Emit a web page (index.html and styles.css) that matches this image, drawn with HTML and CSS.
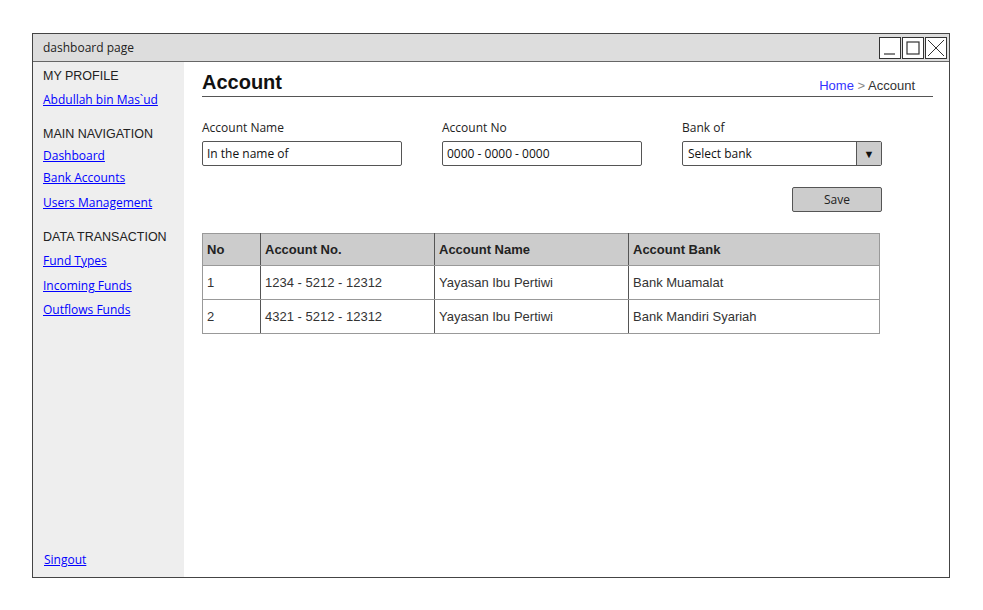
FILE: index.html
```html
<!DOCTYPE html>
<html>
<head>
    <title>dashboard page</title>
    <link rel="stylesheet" href="styles.css">
</head>
<body>
    <div class="window">
        <div class="titlebar">
            <span class="title">dashboard page</span>
            <div class="controls">
                <span class="ctrl"><svg width="20" height="20" viewBox="0 0 20 20"><line x1="4" y1="16" x2="15" y2="16" stroke="#333" stroke-width="1.2"/></svg></span>
                <span class="ctrl"><svg width="20" height="20" viewBox="0 0 20 20"><rect x="4" y="4" width="12" height="12" fill="none" stroke="#333" stroke-width="1.2"/></svg></span>
                <span class="ctrl"><svg width="20" height="20" viewBox="0 0 20 20"><path d="M2 2 L18 18 M18 2 L2 18" stroke="#333" stroke-width="1"/></svg></span>
            </div>
        </div>
        <div class="main">
            <div class="sidebar">
                <div class="nav-head first">MY PROFILE</div>
                <a href="#" class="link gap8">Abdullah bin Mas`ud</a>

                <div class="nav-head">MAIN NAVIGATION</div>
                <a href="#" class="link gap6">Dashboard</a>
                <a href="#" class="link gap6">Bank Accounts</a>
                <a href="#" class="link gap9">Users Management</a>

                <div class="nav-head">DATA TRANSACTION</div>
                <a href="#" class="link gap8">Fund Types</a>
                <a href="#" class="link gap9">Incoming Funds</a>
                <a href="#" class="link gap8">Outflows Funds</a>

                <a href="#" class="link signout">Singout</a>
            </div>
            <div class="content">
                <div class="page-head">
                    <h1>Account</h1>
                    <div class="breadcrumb"><a href="#">Home</a> <span class="sep">&gt;</span> Account</div>
                </div>

                <div class="form">
                    <div class="fields">
                        <div class="field">
                            <label>Account Name</label>
                            <div class="input">In the name of</div>
                        </div>
                        <div class="field">
                            <label>Account No</label>
                            <div class="input">0000 - 0000 - 0000</div>
                        </div>
                        <div class="field">
                            <label>Bank of</label>
                            <div class="input select">
                                <span class="select-text">Select bank</span>
                                <span class="select-arrow">&#9660;</span>
                            </div>
                        </div>
                    </div>
                    <div class="actions">
                        <button class="save">Save</button>
                    </div>
                </div>

                <table class="accounts">
                    <thead>
                        <tr>
                            <th class="c-no">No</th>
                            <th class="c-acc">Account No.</th>
                            <th class="c-name">Account Name</th>
                            <th class="c-bank">Account Bank</th>
                        </tr>
                    </thead>
                    <tbody>
                        <tr>
                            <td>1</td>
                            <td>1234 - 5212 - 12312</td>
                            <td>Yayasan Ibu Pertiwi</td>
                            <td>Bank Muamalat</td>
                        </tr>
                        <tr>
                            <td>2</td>
                            <td>4321 - 5212 - 12312</td>
                            <td>Yayasan Ibu Pertiwi</td>
                            <td>Bank Mandiri Syariah</td>
                        </tr>
                    </tbody>
                </table>
            </div>
        </div>
    </div>
</body>
</html>
```

FILE: styles.css
```css
body {
    margin: 0;
    background: white;
    font-family: "Comic Sans MS", "Open Sans", sans-serif;
    font-size: 12px;
    color: #222;
}
.window {
    margin: 33px 0 0 32px;
    width: 918px;
    height: 545px;
    box-sizing: border-box;
    border: 1px solid #444;
    display: flex;
    flex-direction: column;
}
.titlebar {
    height: 28px;
    box-sizing: border-box;
    background: #dddddd;
    border-bottom: 1px solid #666;
    display: flex;
    align-items: center;
    justify-content: space-between;
    padding-left: 10px;
    padding-right: 2px;
}
.title {
    font-size: 12px;
    color: #222;
}
.controls {
    display: flex;
    gap: 1px;
}
.ctrl {
    width: 22px;
    height: 22px;
    box-sizing: border-box;
    border: 1px solid #333;
    background: white;
    display: flex;
    align-items: center;
    justify-content: center;
}
.main {
    flex: 1;
    display: flex;
}
.sidebar {
    width: 151px;
    background: #eeeeee;
    padding: 6px 0 9px 10px;
    box-sizing: border-box;
    display: flex;
    flex-direction: column;
    align-items: flex-start;
}
.nav-head {
    font-family: "Liberation Sans", Arial, sans-serif;
    font-size: 12.5px;
    line-height: 16px;
    color: #222;
    margin-top: 18px;
}
.nav-head.first {
    margin-top: 0;
}
.link {
    color: #0000ff;
    font-size: 12px;
    line-height: 16px;
    text-decoration: underline;
}
.gap6 { margin-top: 6px; }
.gap8 { margin-top: 8px; }
.gap9 { margin-top: 9px; }
.signout {
    margin-top: auto;
    margin-left: 1px;
}
.content {
    flex: 1;
    padding: 0 16px 0 18px;
}
.page-head {
    display: flex;
    justify-content: space-between;
    align-items: flex-end;
    padding-top: 8px;
    padding-bottom: 2px;
    border-bottom: 1px solid #555;
}
h1 {
    margin: 0;
    font-family: "Liberation Sans", Arial, sans-serif;
    font-size: 20px;
    line-height: 24px;
    color: #111;
}
.breadcrumb {
    font-family: "Liberation Sans", Arial, sans-serif;
    font-size: 13px;
    line-height: 16px;
    color: #333;
    margin-right: 18px;
}
.breadcrumb a {
    color: #3333ff;
    text-decoration: none;
}
.sep {
    color: #888;
}
.form {
    width: 680px;
    margin-top: 24px;
}
.fields {
    display: flex;
    gap: 40px;
}
.field {
    width: 200px;
}
label {
    display: block;
    font-size: 12px;
    line-height: 14px;
    color: #222;
}
.input {
    margin-top: 6px;
    height: 25px;
    box-sizing: border-box;
    border: 1px solid #555;
    border-radius: 2px;
    padding-left: 4px;
    font-size: 12px;
    line-height: 23px;
    color: #111;
}
.select {
    display: flex;
    padding-left: 0;
}
.select-text {
    flex: 1;
    padding-left: 5px;
}
.select-arrow {
    width: 24px;
    background: #cccccc;
    border-left: 1px solid #555;
    text-align: center;
    font-size: 11px;
    color: #111;
}
.actions {
    display: flex;
    justify-content: flex-end;
    margin-top: 21px;
}
.save {
    width: 90px;
    height: 25px;
    background: #cccccc;
    border: 1px solid #555;
    border-radius: 2px;
    font-family: "Comic Sans MS", "Open Sans", sans-serif;
    font-size: 12px;
    color: #222;
    padding: 0;
}
.accounts {
    margin-top: 21px;
    width: 678px;
    border-collapse: collapse;
    font-family: "Liberation Sans", Arial, sans-serif;
    font-size: 13px;
    color: #333;
}
.accounts th,
.accounts td {
    border: 1px solid #999;
    text-align: left;
    padding: 0 4px;
}
.accounts th {
    height: 31px;
    background: #cccccc;
    color: #222;
    border-left-color: #555;
    border-right-color: #555;
}
.accounts td {
    height: 33px;
    border-left-color: #555;
    border-right-color: #555;
}
.accounts td:first-child,
.accounts th:first-child {
    border-left-color: #999;
}
.accounts td:last-child,
.accounts th:last-child {
    border-right-color: #999;
}
.c-no { width: 49px; }
.c-acc { width: 165px; }
.c-name { width: 185px; }
```
